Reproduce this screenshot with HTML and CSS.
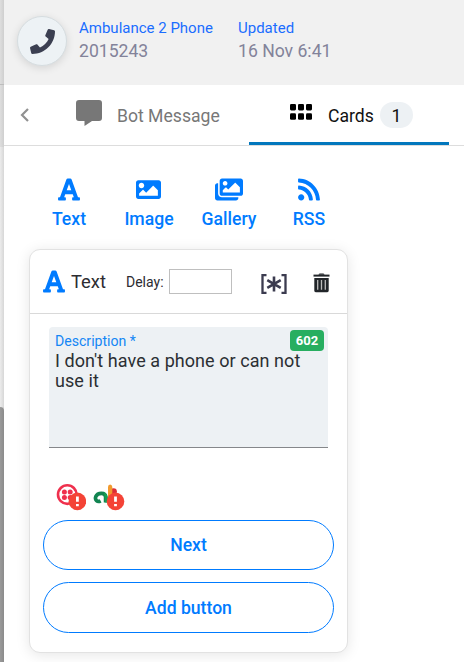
FILE: index.html
```
<!DOCTYPE html>
<html lang="en">
<head>
<meta charset="utf-8">
<title>Ambulance 2 Phone</title>
<link rel="stylesheet" href="styles.css">
</head>
<body>
<aside class="rail"><div class="rail-top"></div><div class="rail-mid"></div><div class="rail-track"></div><div class="rail-thumb"></div></aside>
<main class="panel">
  <header class="header">
    <div class="avatar"><svg width="25" height="25" viewBox="0 0 512 512"><path d="M493.4 24.6l-104-24c-11.3-2.6-22.9 3.3-27.5 13.9l-48 112c-4.2 9.8-1.4 21.3 6.9 28l60.6 49.6c-36 76.7-98.9 140.5-177.2 177.2l-49.6-60.6c-6.8-8.3-18.2-11.1-28-6.9l-112 48C3.9 366.5-2 378.1.6 389.4l24 104C27.1 504.2 36.7 512 48 512c256.1 0 464-207.5 464-464 0-11.2-7.7-20.9-18.6-23.4z"/></svg></div>
    <div class="meta meta-name"><div class="meta-label">Ambulance 2 Phone</div><div class="meta-value">2015243</div></div>
    <div class="meta"><div class="meta-label">Updated</div><div class="meta-value">16 Nov 6:41</div></div>
  </header>
  <nav class="tabs">
    <div class="back"><svg width="10" height="14" viewBox="0 0 10 14"><path d="M8 1 2 7l6 6" fill="none" stroke="#919191" stroke-width="2.2"/></svg></div>
    <div class="tab tab-message">
      <svg class="bubble" width="26" height="26" viewBox="0 0 26 26"><path d="M3 0h20q3 0 3 3v15q0 3-3 3h-7l-7.5 5v-5H3q-3 0-3-3V3q0-3 3-3z" fill="#777"/></svg>
      <span>Bot Message</span>
    </div>
    <div class="tab tab-cards">
      <svg class="grid-icon" width="22" height="16" viewBox="0 0 22 16"><rect width="6" height="6.4" rx="1.3"/><rect x="8" width="6" height="6.4" rx="1.3"/><rect x="16" width="6" height="6.4" rx="1.3"/><rect y="9.3" width="6" height="6.4" rx="1.3"/><rect x="8" y="9.3" width="6" height="6.4" rx="1.3"/><rect x="16" y="9.3" width="6" height="6.4" rx="1.3"/></svg>
      <span class="tab-text">Cards</span><span class="count">1</span>
    </div>
  </nav>
  <section class="tools">
    <div class="tool"><svg width="22" height="25" viewBox="0 0 448 512"><path d="M432 416h-23.41L277.53 53.69A32 32 0 0 0 247.58 32h-47.16a32 32 0 0 0-29.95 21.69L39.41 416H16a16 16 0 0 0-16 16v32a16 16 0 0 0 16 16h128a16 16 0 0 0 16-16v-32a16 16 0 0 0-16-16h-19.58l23.3-64h152.56l23.3 64H304a16 16 0 0 0-16 16v32a16 16 0 0 0 16 16h128a16 16 0 0 0 16-16v-32a16 16 0 0 0-16-16zM176.85 272L224 142.51 271.15 272z"/></svg><span>Text</span></div>
    <div class="tool"><svg class="tool-image" width="25" height="25" viewBox="0 0 512 512"><path d="M464 448H48c-26.51 0-48-21.49-48-48V112c0-26.51 21.49-48 48-48h416c26.51 0 48 21.49 48 48v288c0 26.51-21.49 48-48 48zM112 120c-30.928 0-56 25.072-56 56s25.072 56 56 56 56-25.072 56-56-25.072-56-56-56zM64 384h384V272l-87.515-87.515c-4.686-4.686-12.284-4.686-16.971 0L208 320l-55.515-55.515c-4.686-4.686-12.284-4.686-16.971 0L64 336v48z"/></svg><span>Image</span></div>
    <div class="tool"><svg width="28" height="25" viewBox="0 0 576 512"><path d="M480 416v16c0 26.51-21.49 48-48 48H48c-26.51 0-48-21.49-48-48V176c0-26.51 21.49-48 48-48h16v208c0 44.112 35.888 80 80 80h336zm96-80V80c0-26.51-21.49-48-48-48H144c-26.51 0-48 21.49-48 48v256c0 26.51 21.49 48 48 48h384c26.51 0 48-21.49 48-48zM256 128c0 26.51-21.49 48-48 48s-48-21.49-48-48 21.49-48 48-48 48 21.49 48 48zm-96 144l55.515-55.515c4.686-4.686 12.284-4.686 16.971 0L272 256l135.515-135.515c4.686-4.686 12.284-4.686 16.971 0L512 208v112H160v-48z"/></svg><span>Gallery</span></div>
    <div class="tool"><svg width="22" height="25" viewBox="0 0 448 512"><path d="M128.081 415.959c0 35.369-28.672 64.041-64.041 64.041S0 451.328 0 415.959s28.672-64.041 64.041-64.041 64.04 28.673 64.04 64.041zm175.66 47.25c-8.354-154.6-132.185-278.587-286.95-286.95C7.656 175.765 0 183.105 0 192.253v48.069c0 8.415 6.49 15.472 14.887 16.018 111.832 7.284 201.473 96.702 208.772 208.772.547 8.397 7.604 14.887 16.018 14.887h48.069c9.149.001 16.489-7.655 15.995-16.79zm144.249.288C439.596 229.677 251.465 40.445 16.503 32.01 7.473 31.686 0 38.981 0 48.016v48.068c0 8.625 6.835 15.645 15.453 15.999 191.179 7.839 344.627 161.316 352.465 352.465.353 8.618 7.373 15.453 15.999 15.453h48.068c9.034-.001 16.329-7.474 16.005-16.504z"/></svg><span>RSS</span></div>
  </section>
  <article class="card">
    <div class="card-head">
      <svg class="card-icon" width="22" height="25" viewBox="0 0 448 512"><path d="M432 416h-23.41L277.53 53.69A32 32 0 0 0 247.58 32h-47.16a32 32 0 0 0-29.95 21.69L39.41 416H16a16 16 0 0 0-16 16v32a16 16 0 0 0 16 16h128a16 16 0 0 0 16-16v-32a16 16 0 0 0-16-16h-19.58l23.3-64h152.56l23.3 64H304a16 16 0 0 0-16 16v32a16 16 0 0 0 16 16h128a16 16 0 0 0 16-16v-32a16 16 0 0 0-16-16zM176.85 272L224 142.51 271.15 272z"/></svg>
      <span class="card-title">Text</span>
      <span class="delay">Delay:</span>
      <input class="delay-input" type="text" aria-label="Delay">
      <svg class="variable" width="26" height="20" viewBox="0 0 26 20" fill="none" stroke="#3b3b4f"><path d="M5.5 1.1H1.5v17.8h4M20.5 1.1h4v17.8h-4" stroke-width="2.3"/><path d="M13 2.6v14.8M6.3 6.1l13.4 7.8M19.7 6.1l-13.4 7.8" stroke-width="2.6"/></svg>
      <svg class="trash" width="17" height="20" viewBox="0 0 17 20"><path d="M1.3 5h14.4v12.4q0 1.9-1.9 1.9H3.2q-1.9 0-1.9-1.9z" fill="#212529"/><path d="M.5 2.6h16" stroke="#212529" stroke-width="2"/><path d="M5.5 1.7Q5.7.5 7 .5h3q1.3 0 1.5 1.2z" fill="#212529"/><path d="M4.7 7.1v9.6M8.5 7.1v9.6M12.3 7.1v9.6" stroke="#bbb" stroke-width="1.3"/></svg>
    </div>
    <div class="card-body">
      <div class="field">
        <div class="field-label">Description *</div>
        <div class="field-text">I don't have a phone or can not use it</div>
        <span class="remaining">602</span>
      </div>
      <div class="channels">
        <div class="channel">
          <svg width="30" height="28" viewBox="0 0 30 28"><circle cx="11.3" cy="10.6" r="9.3" fill="none" stroke="#ef304d" stroke-width="2.6"/><g fill="#ef304d"><circle cx="8.4" cy="8" r="2.5"/><circle cx="14.2" cy="8" r="2.5"/><circle cx="8.4" cy="13.5" r="2.5"/><circle cx="14.2" cy="13.5" r="2.5"/></g><circle cx="21.4" cy="17.4" r="8.8" fill="#f44336"/><path d="M21.4 12.4v5.4M21.4 20v2.3" stroke="#fff" stroke-width="2.8"/></svg>
        </div>
        <div class="channel">
          <svg width="32" height="28" viewBox="0 0 32 28"><path d="M7.6 16.8C4.3 18.7 1.6 15.8 2.8 12.6 4.6 8.4 12.6 8 12.6 13v5.5" fill="none" stroke="#118451" stroke-width="3.7"/><path d="M11 7.9q4.6 2 4.2 10.6h-3z" fill="#13a052"/><circle cx="20.5" cy="7.6" r="3.4" fill="#dc2c35"/><path d="M15 17V3q0-2.5 2.1-2.5T19.3 3v14z" fill="#f29a2e"/><circle cx="22.5" cy="17.4" r="8.8" fill="#f44336"/><path d="M22.5 12.4v5.4M22.5 20v2.3" stroke="#fff" stroke-width="2.8"/></svg>
        </div>
      </div>
      <button class="pill pill-next">Next</button>
      <button class="pill pill-add">Add button</button>
    </div>
  </article>
</main>
</body>
</html>
```

FILE: styles.css
```
* { box-sizing: border-box; }
body {
  margin: 0;
  height: 662px;
  display: flex;
  overflow: hidden;
  background: #fff;
  font-family: Roboto, "Liberation Sans", sans-serif;
  font-size: 17.6px;
}
svg { display: block; flex: none; }
.rail { width: 4px; display: flex; flex-direction: column; background: linear-gradient(90deg, #dedede, #cfcfcf); }
.rail-top { height: 85px; border-bottom: 1px solid #bdbdbd; }
.rail-mid { height: 62px; }
.rail-track { height: 260px; background: linear-gradient(90deg, #ececec, #d7d7d7); }
.rail-thumb { flex: 1; background: linear-gradient(90deg, #9a9a9a, #8b8b8b); border-top-right-radius: 4px; }
.panel { width: 460px; }
.header { height: 85px; display: flex; padding: 16px 0 0 13px; background: #f1f1f1; }
.avatar {
  width: 50px; height: 50px;
  display: flex; align-items: center; justify-content: center;
  background: #edf2f5; border: 1px solid #d6dde0; border-radius: 50%;
  box-shadow: 0 2px 8px rgba(0, 0, 0, .12);
}
.avatar svg { fill: #3b3f51; }
.meta { padding-top: 1px; }
.meta-name { width: 159px; margin-left: 12px; }
.meta-label { font-size: 15px; line-height: 22px; color: #1a6dff; white-space: nowrap; }
.meta-value { line-height: 24px; color: #83839a; }
.tabs { height: 61px; display: flex; border-bottom: 1px solid #ddd; }
.back { width: 45px; padding: 23px 0 0 16px; }
.tab { display: flex; align-items: center; height: 61px; }
.tab-message { width: 200px; padding-left: 27px; color: #777; }
.bubble { margin: -6px 15px 0 0; }
.tab-cards { width: 200px; height: 60px; padding: 3px 0 0 41px; border-bottom: 3px solid #0277bd; color: #111; }
.tab-text { padding-top: 2px; }
.grid-icon { margin: -6px 16px 0 0; }
.count { width: 33px; height: 26px; margin-left: 6px; border-radius: 13px; background: #edf1f4; line-height: 28px; text-align: center; }
.tools { display: grid; grid-template-columns: repeat(4, 80px); padding: 31px 0 0 25px; height: 103px; }
.tool { display: flex; flex-direction: column; align-items: center; color: #007bff; font-weight: 500; line-height: 24px; gap: 5px; }
.tool svg, .card-icon { fill: #007bff; }
.tool .tool-image { margin-right: 1px; }
.card {
  width: 319px; height: 404px; margin-left: 25px;
  border: 1px solid #e2e2e2; border-radius: 11px;
  background: #fff; box-shadow: 0 2px 14px rgba(0, 0, 0, .1);
}
.card-head { height: 64px; display: flex; align-items: center; padding-left: 13px; border-bottom: 1px solid #d9d9d9; color: #2c2c31; }
.card-title { width: 55px; margin-left: 6px; font-size: 18.4px; }
.delay { width: 43px; font-size: 14px; }
.delay-input { width: 63px; height: 25px; padding: 0; border: 1px solid #bfbfbf; background: #fff; }
.variable { margin: 4px 0 0 29px; }
.trash { margin: 2px 0 0 26px; }
.card-body { padding: 13px; }
.field { position: relative; height: 121px; margin: 0 6px; padding: 5px 6px; background: #edf1f4; border-bottom: 1px solid #85878a; border-radius: 4px 4px 0 0; }
.field-label { font-size: 14.1px; line-height: 19px; color: #1486f5; }
.field-text { font-size: 18px; line-height: 20px; letter-spacing: .06px; color: #2b2f33; }
.remaining { position: absolute; top: 3px; right: 4px; width: 34px; height: 21px; border-radius: 4px; background: #27ae60; color: #fff; font-size: 13px; font-weight: 700; line-height: 22px; text-align: center; }
.channels { display: flex; height: 72px; padding: 36px 0 0 13px; gap: 7px; }
.pill { display: block; width: 291px; height: 50px; padding: 0; border: 1px solid #007bff; border-radius: 26px; background: #fff; color: #007bff; font: 500 17.6px Roboto, "Liberation Sans", sans-serif; }
.pill-add { height: 51px; margin-top: 12px; }
```
